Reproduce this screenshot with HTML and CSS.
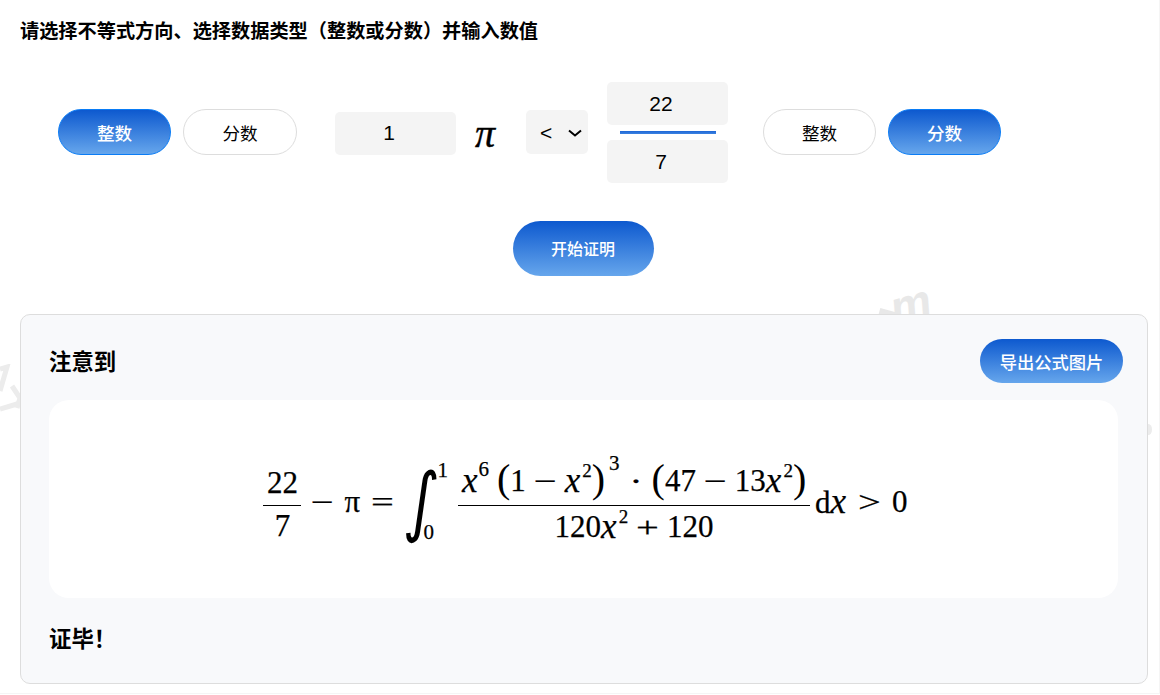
FILE: index.html
```html
<!DOCTYPE html>
<html lang="zh-CN">
<head>
    <meta charset="UTF-8">
    <meta name="viewport" content="width=device-width, initial-scale=1.0">
    <title>不等式证明</title>
    <link rel="stylesheet" href="styles.css">
</head>
<body>
    <div class="page">
        <!-- faint watermark behind the panel -->
        <svg class="wm-left" width="24" height="50" viewBox="0 0 24 50">
            <path d="M0 5 L7 3 L0 27 M0 45 L17 40 M12 22 L20 34 L17 44" fill="none" stroke="#ececec" stroke-width="5"/>
        </svg>
        <div class="watermark wm-mid">m</div>
        <div class="wm-dash"></div>
        <div class="wm-dot"></div>

        <h1 class="prompt">请选择不等式方向、选择数据类型（整数或分数）并输入数值</h1>

        <div class="controls">
            <div class="type-group">
                <button class="pill active">整数</button>
                <button class="pill">分数</button>
            </div>
            <input class="num-input left-input" type="text" value="1">
            <span class="pi">π</span>
            <select class="dir-select">
                <option>&lt;</option>
                <option>&gt;</option>
            </select>
            <div class="fraction-input">
                <input class="num-input" type="text" value="22">
                <div class="fraction-bar"></div>
                <input class="num-input" type="text" value="7">
            </div>
            <div class="type-group right-group">
                <button class="pill">整数</button>
                <button class="pill active">分数</button>
            </div>
        </div>

        <div class="start-row">
            <button class="start-btn">开始证明</button>
        </div>

        <div class="panel">
            <div class="panel-head">
                <h2 class="panel-title">注意到</h2>
                <button class="export-btn">导出公式图片</button>
            </div>

            <div class="formula-box">
                <div class="formula">
                    <span class="frac small-frac">
                        <span class="top">22</span>
                        <span class="bottom">7</span>
                    </span>
                    <span class="op minus">−</span>
                    <span>π</span>
                    <span class="op eq">=</span>
                    <span class="integral">
                        <span class="int-sign">∫</span>
                        <span class="limits">
                            <span class="upper">1</span>
                            <span class="lower">0</span>
                        </span>
                    </span>
                    <span class="frac main-frac">
                        <span class="top">
                            <i>x</i><sup>6</sup><span class="big-paren first">(</span>1<span class="op inner">−</span><i>x</i><sup class="in">2</sup><span class="big-paren">)</span><sup class="out">3</sup><span class="op dot">·</span><span class="big-paren">(</span>47<span class="op inner">−</span>13<i>x</i><sup class="in">2</sup><span class="big-paren">)</span>
                        </span>
                        <span class="bottom">120<i>x</i><sup class="in">2</sup><span class="op inner">+</span>120</span>
                    </span>
                    <span class="dx">d<i>x</i></span>
                    <span class="op gt">&gt;</span>
                    <span>0</span>
                </div>
            </div>

            <p class="done">证毕！</p>
        </div>
    </div>
</body>
</html>
```
FILE: styles.css
```css
* {
    box-sizing: border-box;
    margin: 0;
    padding: 0;
}

body {
    background-color: #fff;
    font-family: "Liberation Sans", "Noto Sans CJK SC", sans-serif;
    color: #000;
    overflow: hidden;
}

.page {
    position: relative;
    height: 694px;
    padding: 21px 11px 0 20px;
    border-right: 1px solid #f5f5f5;
    border-bottom: 1px solid #f5f5f5;
    overflow: hidden;
}

.wm-left {
    position: absolute;
    left: 0;
    top: 364px;
}

.watermark {
    position: absolute;
    color: #e8e8e8;
    font-family: "Liberation Sans", sans-serif;
    font-style: italic;
    font-weight: bold;
    transform: rotate(-15deg);
}

.wm-mid {
    left: 890px;
    top: 277px;
    font-size: 46px;
}

.wm-dash {
    position: absolute;
    left: 879px;
    top: 310px;
    width: 16px;
    height: 8px;
    background-color: #e8e8e8;
    transform: rotate(15deg);
}

.wm-dot {
    position: absolute;
    left: 1145px;
    top: 424px;
    width: 7px;
    height: 11px;
    border-radius: 50%;
    background-color: #ececec;
}

.prompt {
    position: relative;
    font-size: 19.2px;
    font-weight: bold;
    line-height: 22px;
}

.controls {
    position: relative;
    display: flex;
    align-items: center;
    height: 101px;
    margin-top: 39px;
    padding-left: 38px;
}

.type-group {
    display: flex;
    gap: 12px;
}

.pill {
    width: 113px;
    height: 46px;
    border: 1px solid #ddd;
    border-radius: 23px;
    background: #fff;
    color: #000;
    font-family: inherit;
    font-size: 17.6px;
    margin-bottom: 1px;
}

.pill:last-child {
    width: 114px;
}

.right-group .pill:last-child {
    width: 113px;
}

.pill.active {
    border-color: #0a7cf5;
    background: linear-gradient(#0d59cf, #66a6ec);
    color: #fff;
    font-weight: 500;
}

.num-input {
    width: 121px;
    height: 43px;
    border: none;
    border-radius: 5px;
    background-color: #f4f4f4;
    color: #000;
    font-family: inherit;
    font-size: 21px;
    text-align: center;
    padding-right: 13px;
}

.left-input {
    margin-left: 38px;
    margin-top: 1px;
}

.pi {
    width: 70px;
    padding-left: 19px;
    padding-top: 2px;
    font-family: "Liberation Serif", serif;
    font-style: italic;
    font-size: 40px;
    line-height: 46px;
    -webkit-text-stroke: 0.4px #000;
}

/* native arrow is too small, draw our own */
.dir-select {
    appearance: none;
    width: 62px;
    height: 44px;
    margin-bottom: 1px;
    border: none;
    border-radius: 5px;
    background-color: #f4f4f4;
    background-image: url("data:image/svg+xml,%3Csvg xmlns='http://www.w3.org/2000/svg' width='14' height='8'%3E%3Cpath d='M1 1.5 L7 6.5 L13 1.5' fill='none' stroke='%23000' stroke-width='2'/%3E%3C/svg%3E");
    background-repeat: no-repeat;
    background-position: 42px 19px;
    color: #000;
    font-family: inherit;
    font-size: 21px;
    padding-left: 14px;
}

.fraction-input {
    display: flex;
    flex-direction: column;
    align-items: center;
    margin-left: 19px;
}

.fraction-bar {
    width: 96px;
    height: 3px;
    margin: 6px 0;
    background: linear-gradient(#1d66d6, #3c82e0);
}

.right-group {
    margin-left: 35px;
}

.start-row {
    position: relative;
    display: flex;
    justify-content: center;
    margin-top: 38px;
    padding-right: 2px;
}

.start-btn,
.export-btn {
    border: none;
    background: linear-gradient(#0d59cf, #66a6ec);
    color: #fff;
    font-family: inherit;
    font-weight: 500;
}

.start-btn {
    width: 141px;
    height: 55px;
    border-radius: 28px;
    font-size: 16px;
    padding-bottom: 2px;
}

.panel {
    position: relative;
    height: 370px;
    margin-top: 38px;
    padding: 24px 24px 0 28px;
    border: 1px solid #ddd;
    border-radius: 10px;
    background-color: #f8f9fb;
}

.panel-head {
    display: flex;
    justify-content: space-between;
    align-items: center;
    height: 44px;
}

.panel-title,
.done {
    font-size: 22.4px;
    font-weight: bold;
    font-family: "Noto Sans CJK SC", sans-serif;
    line-height: 30px;
}

.panel-title {
    margin-bottom: 2px;
}

.export-btn {
    width: 143px;
    height: 44px;
    border-radius: 22px;
    font-size: 17.3px;
}

.formula-box {
    display: flex;
    justify-content: center;
    align-items: center;
    width: 1069px;
    height: 198px;
    margin-top: 17px;
    border-radius: 20px;
    background-color: #fff;
}

.formula {
    display: flex;
    align-items: center;
    font-family: "Liberation Serif", serif;
    font-size: 31px;
    -webkit-text-stroke: 0.25px #000;
    white-space: nowrap;
    padding-top: 6px;
    padding-left: 4px;
}

.formula i {
    font-size: 35px;
}

.frac {
    display: inline-flex;
    flex-direction: column;
    align-items: center;
}

.frac .top {
    display: block;
    line-height: 37px;
    padding-bottom: 2px;
    border-bottom: 1px solid #000;
    text-align: center;
    width: 100%;
}

.frac .bottom {
    display: flex;
    align-items: center;
    line-height: 38px;
    padding-top: 2px;
}

.small-frac {
    width: 38px;
    margin-top: 5px;
}

.small-frac .top {
    padding-bottom: 4px;
}

.small-frac .bottom {
    padding-top: 1px;
}

.main-frac {
    width: 352px;
}

.main-frac .top {
    display: flex;
    justify-content: center;
    align-items: center;
    height: 47px;
}

/* Liberation's operators are narrower than the math font, stretch them */
.op {
    display: inline-block;
    font-size: 30px;
    transform: scaleX(1.35);
}

.minus {
    margin: 0 13px 0 13px;
}

.eq {
    margin: 0 13px 0 14px;
}

.op.inner {
    margin: 0 11px;
}

.op.dot {
    margin: 0 11px;
}

sup {
    font-size: 21px;
    line-height: 0;
    position: relative;
    top: -12px;
    margin-left: 1px;
}

sup.in {
    font-size: 19px;
    top: -10px;
    margin-left: 2px;
}

sup.out {
    top: -18px;
    margin-left: 4px;
}

.big-paren {
    font-size: 40px;
    line-height: 40px;
    position: relative;
    top: -2px;
    -webkit-text-stroke: 0;
}

.big-paren.first {
    margin-left: 8px;
}

.integral {
    display: inline-flex;
    align-items: center;
    height: 96px;
    margin-top: -2px;
}

.int-sign {
    font-family: "DejaVu Sans", sans-serif;
    font-size: 76px;
    line-height: 96px;
    -webkit-text-stroke: 0;
    transform: translateX(-2px) skewX(-6deg) scaleX(0.8);
}

.limits {
    display: flex;
    flex-direction: column;
    justify-content: space-between;
    height: 88px;
    margin-left: -6px;
    margin-right: 10px;
    font-size: 21px;
    line-height: 26px;
}

.lower {
    margin-left: -14px;
}

.dx {
    margin-left: 5px;
}

.gt {
    margin: 0 14px 0 15px;
}

.done {
    margin-top: 24px;
}
```
